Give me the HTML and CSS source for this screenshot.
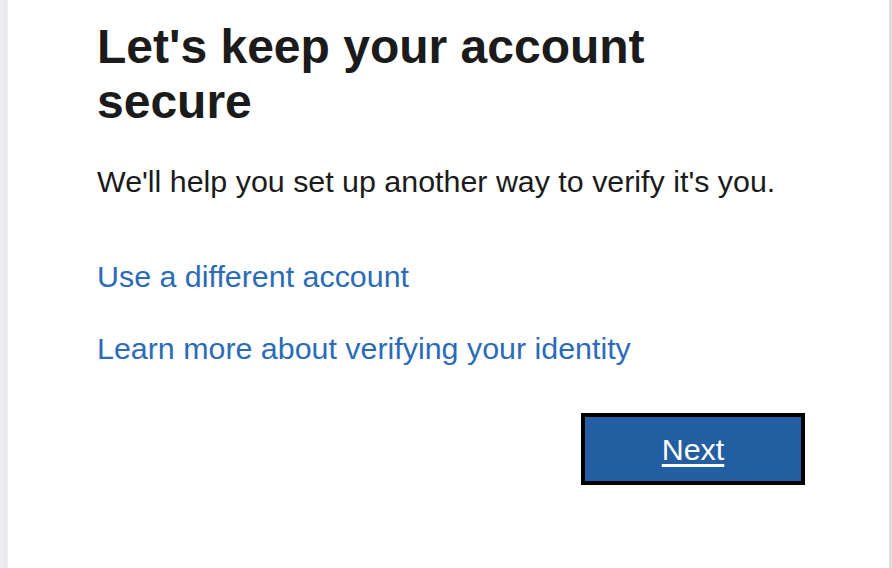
FILE: index.html
```html
<!DOCTYPE html>
<html lang="en">
<head>
<meta charset="utf-8">
<title>Let's keep your account secure</title>
<link rel="stylesheet" href="styles.css">
</head>
<body>
<div class="page">
  <div class="edge-left"></div>
  <main class="card">
    <h1 class="title">Let's keep your account secure</h1>
    <p class="lead">We'll help you set up another way to verify it's you.</p>
    <a class="link" href="#">Use a different account</a>
    <a class="link" href="#">Learn more about verifying your identity</a>
    <div class="actions">
      <button class="next" type="button"><span>Next</span></button>
    </div>
  </main>
  <div class="edge-right"></div>
</div>
</body>
</html>
```
FILE: styles.css
```css
html, body {
  margin: 0;
  padding: 0;
  height: 100%;
  background: #ffffff;
}
.page {
  display: flex;
  height: 568px;
  overflow: hidden;
  font-family: "Liberation Sans", Arial, Helvetica, sans-serif;
}
.edge-left {
  width: 8px;
  flex: none;
  background: linear-gradient(to right, #f0f0f2, #e9e8ec 80%, #f5f5f7);
}
.edge-right {
  width: 3px;
  flex: none;
  background: #dddce1;
}
.card {
  flex: 1;
  background: #ffffff;
  padding: 19px 84px 0 89px;
  display: flex;
  flex-direction: column;
  align-items: flex-start;
}
.title {
  margin: 0;
  max-width: 620px;
  font-size: 48px;
  line-height: 55px;
  font-weight: bold;
  color: #1b1b1b;
}
.lead {
  margin: 34px 0 0;
  font-size: 30.4px;
  line-height: 36px;
  color: #1b1b1b;
}
.link {
  margin-top: 59px;
  font-size: 30.4px;
  line-height: 36px;
  color: #2b6bb7;
  text-decoration: none;
}
.link + .link {
  margin-top: 36px;
}
.actions {
  align-self: stretch;
  display: flex;
  justify-content: flex-end;
  margin-top: 47px;
}
.next {
  width: 224px;
  height: 72px;
  box-sizing: border-box;
  border: 4px solid #000000;
  background: #245ea2;
  color: #ffffff;
  font-family: inherit;
  font-size: 30.4px;
  padding: 0;
  cursor: pointer;
}
.next span {
  text-decoration: underline;
  text-underline-offset: 4px;
  text-decoration-thickness: 3px;
}
```
